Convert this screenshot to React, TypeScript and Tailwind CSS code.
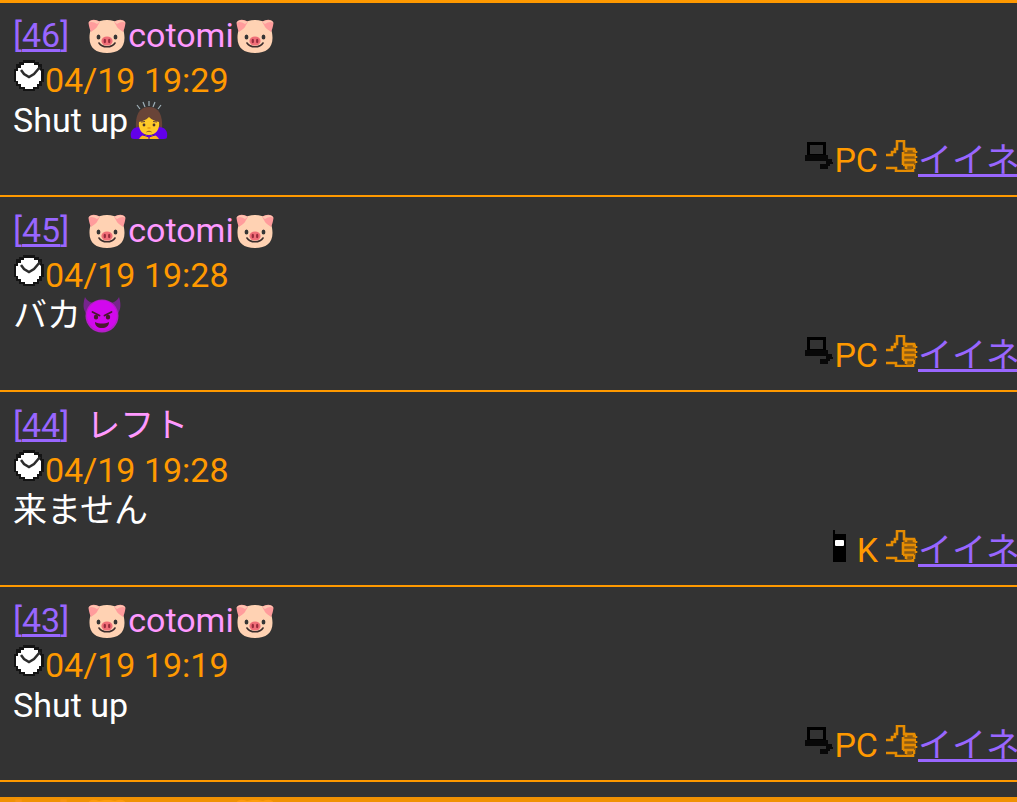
import type { ReactNode } from "react";

type Post = {
  id: number;
  name: ReactNode;
  date: string;
  body: ReactNode;
  device: "PC" | "K";
};

function Pig() {
  return (
    <svg className="h-10 w-[42px] shrink-0" viewBox="0 0 40 40" role="img" aria-label="pig">
      <path d="M20 5C25 5 29 6 32 9C36 12 37.500 17 37.500 23C37.500 33 31 38 20 38S2.500 33 2.500 23C2.500 17 4 12 8 9C11 6 15 5 20 5Z" fill="#ffd2b3" />
      <path d="M1.500 8C2 12 3 15 4 17C6 15 9 14 10 12C11 10 12 8 13 7C9 4 3 4 1.500 8ZM38.500 8C38 12 37 15 36 17C34 15 31 14 30 12C29 10 28 8 27 7C31 4 37 4 38.500 8Z" fill="#ff9c9c" />
      <path d="M1.500 8C2 5 8 4 13 7L10 9C7 7 4 6 1.500 8ZM38.500 8C38 5 32 4 27 7L30 9C33 7 36 6 38.500 8Z" fill="#ffc5b0" />
      <ellipse cx="11.500" cy="22" rx="1.900" ry="2.600" fill="#353535" />
      <ellipse cx="28.500" cy="22" rx="1.900" ry="2.600" fill="#353535" />
      <path d="M12 28C15 33 25 33 28 28" fill="none" stroke="#3b2c2c" strokeWidth="1.600" strokeLinecap="round" />
      <ellipse cx="20" cy="26" rx="5.600" ry="4.500" fill="#f06e78" />
      <ellipse cx="17.800" cy="26" rx="1.200" ry="2.300" fill="#972c3d" />
      <ellipse cx="22.200" cy="26" rx="1.200" ry="2.300" fill="#972c3d" />
    </svg>
  );
}

function Bow() {
  return (
    <svg className="h-10 w-[42px] shrink-0" viewBox="0 0 40 40" role="img" aria-label="bowing">
      <path d="M8 5L11 9M14 2L16 7M20 1V6M26 2L24 7M32 5L29 9" stroke="#9fb0b8" strokeWidth="1.200" />
      <path d="M7 29C6 15 10 7 20 7S34 15 33 29L30 33H10Z" fill="#694438" />
      <path d="M11 27C3 27 1 32 2 37C2 38 3 39 5 39H35C37 39 38 38 38 37C39 32 37 27 29 27L24 35H16Z" fill="#6200ea" />
      <path d="M10 22C14 21 17 20 20 17C23 20 26 21 30 22C31 29 27 35 20 35S9 29 10 22Z" fill="#ffca28" />
      <path d="M10 39C12 35 16 34 20 37C24 34 28 35 30 39Z" fill="#f9b51f" />
      <path d="M20 39V37L14 35M20 37L26 35" fill="none" stroke="#5100c9" strokeWidth="1" />
      <path d="M12 22L16 21.500M24 21.500L28 22" stroke="#694438" strokeWidth="1" />
      <circle cx="15" cy="25" r="1.400" fill="#4b352d" />
      <circle cx="25" cy="25" r="1.400" fill="#4b352d" />
      <path d="M18.500 28H21.500" stroke="#e69a13" strokeWidth="1.500" />
      <path d="M17.500 32C19 31 21 31 22.500 32" fill="none" stroke="#8a571d" strokeWidth="1" />
    </svg>
  );
}

function Devil() {
  return (
    <svg className="h-10 w-[42px] shrink-0" viewBox="0 0 40 40" role="img" aria-label="devil">
      <path d="M3 2C0 11 2 17 6 21L15 9C9 8 5 6 3 2ZM37 2C40 11 38 17 34 21L25 9C31 8 35 6 37 2Z" fill="#76258c" />
      <circle cx="20" cy="21" r="16.500" fill="#b31ec6" />
      <circle cx="20" cy="20.500" r="15" fill="#d208ee" />
      <path d="M10.500 17L17.500 20.500M29.500 17L22.500 20.500" stroke="#4a1830" strokeWidth="1.800" strokeLinecap="round" />
      <ellipse cx="14" cy="22" rx="2.200" ry="2.600" fill="#4a1830" />
      <ellipse cx="26" cy="22" rx="2.200" ry="2.600" fill="#4a1830" />
      <path d="M13 27C17 29 23 29 27 27C27 31 24 33 20 33S13 31 13 27Z" fill="#4a1830" />
    </svg>
  );
}

function Clock() {
  return (
    <svg className="mb-2 h-8 w-8 shrink-0" viewBox="0 0 32 32" aria-hidden="true">
      <path d="M10 0H22V2H26V4H29V9H31V22H29V26H26V29H22V31H10V29H6V26H3V22H1V9H3V4H6V2H10Z" fill="#141414" />
      <path d="M11 3H21V5H25V8L28 11V21H26V24H24V27H20V29H12V27H8V24H5V21H3V11H5V8H8V5H11Z" fill="#fff" />
      <path d="M8 10L11 14L16 17L21 14L27 7" fill="none" stroke="#2c2c2c" strokeWidth="2.500" />
    </svg>
  );
}

function Computer() {
  return (
    <svg className="mb-2 h-8 w-8 shrink-0" viewBox="0 0 32 32" aria-hidden="true">
      <path d="M5 2H24V17H5ZM8 5V14H21V5Z" fill="#000" fillRule="evenodd" />
      <path d="M3 15H26V19H30V22H31V24H28V26H26V29H18V24H24V21H3Z" fill="#080808" />
    </svg>
  );
}

function Phone() {
  return (
    <svg className="mb-2 h-8 w-8 shrink-0" viewBox="0 0 32 32" aria-hidden="true">
      <path d="M8 0H10V4H21V32H8Z" fill="#000" />
      <rect x="10" y="10" width="9" height="6" rx="1" fill="#fff" />
    </svg>
  );
}

function Thumb() {
  return (
    <svg className="mb-2 h-8 w-8 shrink-0" viewBox="0 0 32 32" aria-hidden="true">
      <path d="M17 9H30V25H26V31H20V25H17Z" fill="#8a5a14" />
      <g fill="none" stroke="#e58c02" strokeWidth="2.600">
        <path d="M0 15H6V12H9V9H11V1H18V9H20V12" />
        <path d="M19 9H28V11H30M17 12V25M17 15H30M17 20H30M17 25H28" />
        <path d="M30 11V13M30 16V18M30 21V23M28 25V29M0 28H10V31H27V29M20 29V26" />
      </g>
    </svg>
  );
}

const cotomi = (
  <>
    <Pig />
    cotomi
    <Pig />
  </>
);

const posts: Post[] = [
  { id: 46, name: cotomi, date: "04/19 19:29", body: <>Shut up<Bow /></>, device: "PC" },
  { id: 45, name: cotomi, date: "04/19 19:28", body: <>バカ<Devil /></>, device: "PC" },
  { id: 44, name: "レフト", date: "04/19 19:28", body: "来ません", device: "K" },
  { id: 43, name: cotomi, date: "04/19 19:19", body: "Shut up", device: "PC" },
  { id: 42, name: cotomi, date: "04/19 19:18", body: "Shut up", device: "PC" },
];

function PostItem({ post }: { post: Post }) {
  return (
    <li className="border-b-2 border-[#ff9900] pt-3 pb-[11px] pl-[13px]">
      <div className="flex h-[42px] items-center">
        <a href={`#post-${post.id}`} className="mr-[17px] text-[#9966ff] underline">
          [{post.id}]
        </a>
        <span className="flex items-center text-[#ff99ff]">{post.name}</span>
      </div>
      <div className="flex h-[48px] items-center text-[#ff9900]">
        <Clock />
        <time>{post.date}</time>
      </div>
      <p className="flex h-[31px] items-center text-white">{post.body}</p>
      <div className="-mr-[3px] flex h-[49px] items-center justify-end text-[#ff9900]">
        {post.device === "PC" ? <Computer /> : <Phone />}
        <span className="mr-2">{post.device}</span>
        <Thumb />
        <a href={`#like-${post.id}`} className="text-[#9966ff] underline">
          イイネ
        </a>
      </div>
    </li>
  );
}

export default function App() {
  return (
    <div className="h-screen overflow-hidden bg-[#333333] font-[Roboto,'Noto_Sans_CJK_JP',sans-serif] text-[34px] leading-10 whitespace-nowrap">
      <div className="h-[3px] bg-[#ff9900]" />
      <ul className="-mt-px">
        {posts.map((post) => (
          <PostItem key={post.id} post={post} />
        ))}
      </ul>
      <div className="fixed inset-x-0 bottom-0 h-[5px] bg-[#ff9900]/93" />
    </div>
  );
}
